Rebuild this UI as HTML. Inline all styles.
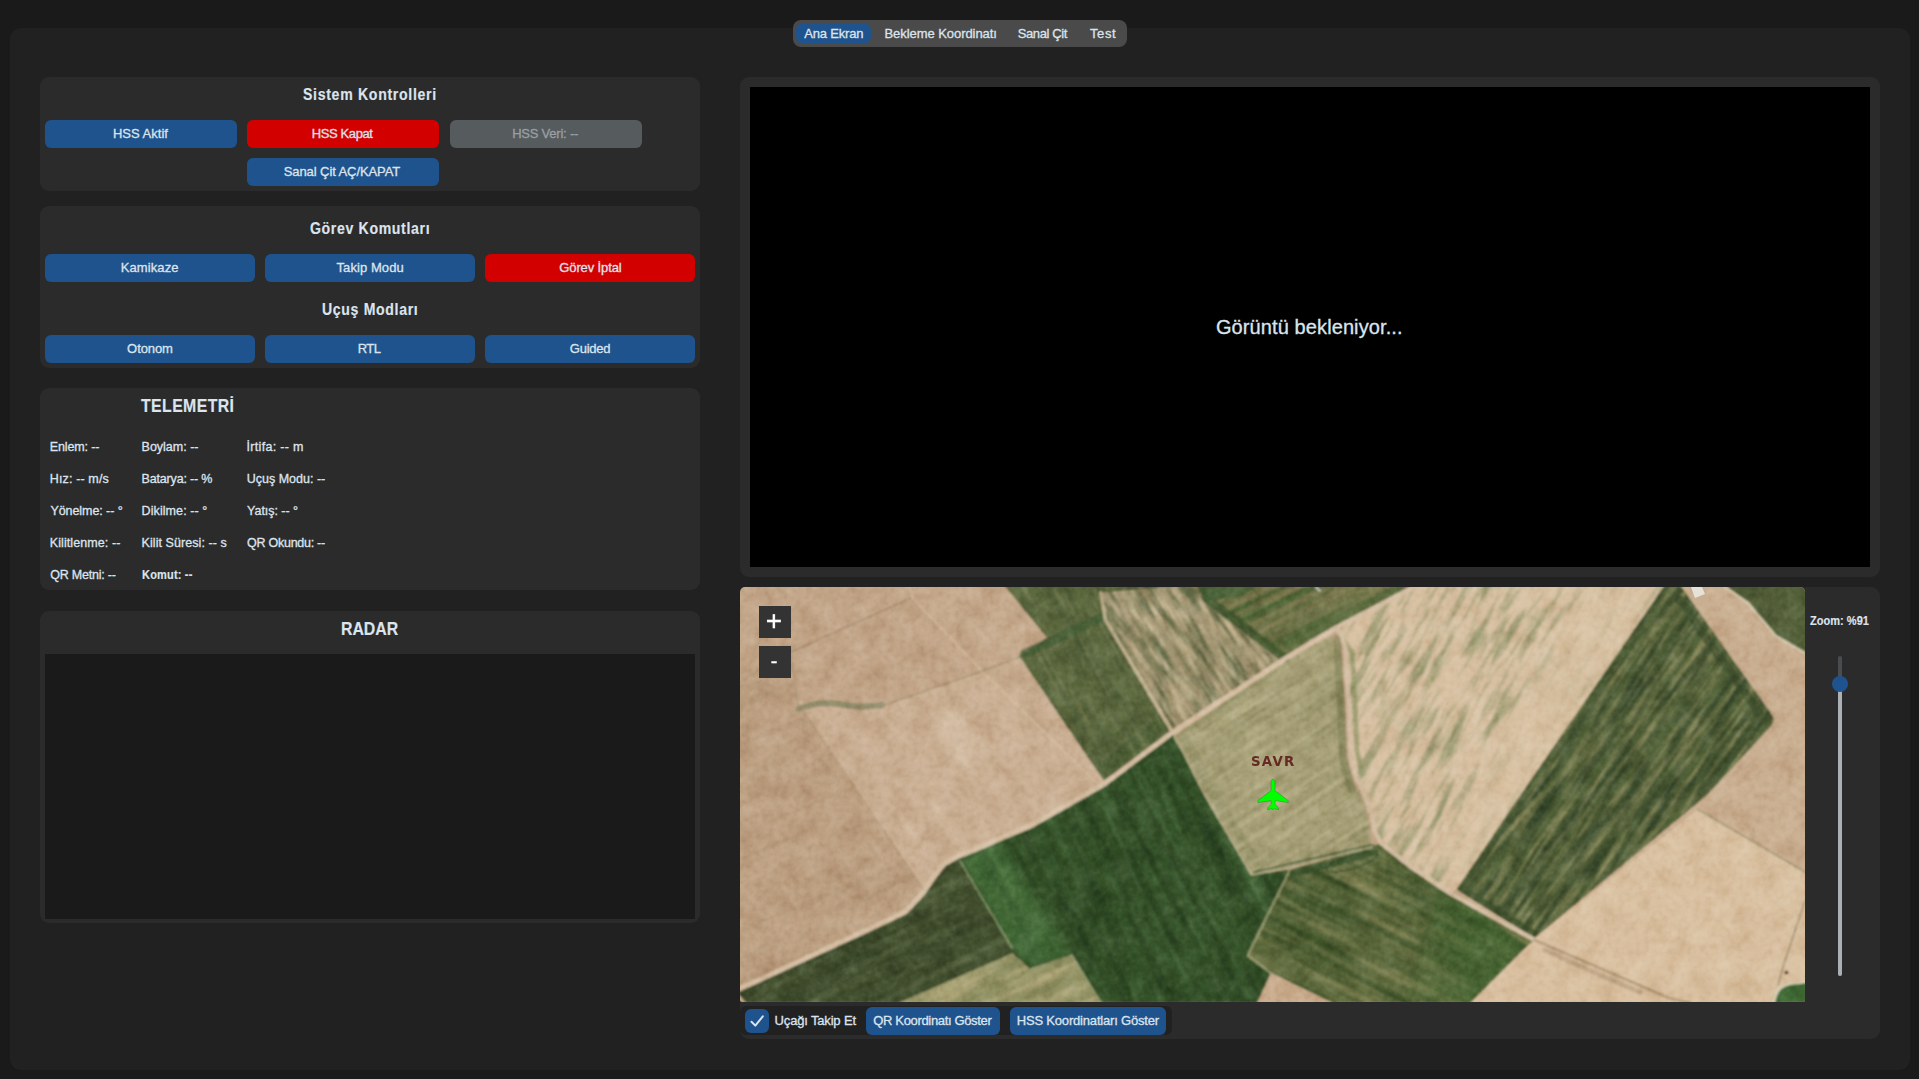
<!DOCTYPE html>
<html lang="tr">
<head>
<meta charset="utf-8">
<title>Yer İstasyonu</title>
<style>
html,body{margin:0;padding:0;}
body{width:1919px;height:1079px;overflow:hidden;background:#1a1a1a;position:relative;font-family:"Liberation Sans", sans-serif;color:#dce4ee;}
div,span,button,nav,section{position:absolute;box-sizing:border-box;}
.t{white-space:nowrap;line-height:20px;height:20px;transform-origin:0 50%;-webkit-text-stroke:0.3px currentColor;}
.b{-webkit-text-stroke:0.15px currentColor;}
.panel{background:#212121;border-radius:11px;}
.box{background:#2b2b2b;border-radius:9px;}
.btn{background:#1f538d;border-radius:6px;}
.red{background:#d30000;}
.dis{background:#565b5e;}
.tabs{background:#4a4a4a;border-radius:8px;}
.tabsel{background:#1f538d;border-radius:7px;}
.radar{background:#1a1a1a;}
.video{background:#000;}
.zb{background:#333;}
#map{left:740px;top:587px;width:1065px;height:415px;overflow:hidden;border-radius:5px 5px 2px 2px;}
#map svg{display:block;}
</style>
</head>
<body>
<div class="panel" style="left:10px;top:28px;width:1900px;height:1042px;"></div>

<!-- tab bar -->
<nav class="tabs" style="left:793px;top:20px;width:334px;height:27px;"></nav>
<div class="tabsel" style="left:796px;top:23px;width:75px;height:21px;"></div>
<span class="t" style="left:804.30px;top:24.27px;font-size:13px;letter-spacing:-0.201px;">Ana Ekran</span><span class="t" style="left:884.51px;top:24.27px;font-size:13px;letter-spacing:-0.061px;">Bekleme Koordinatı</span><span class="t" style="left:1017.74px;top:24.27px;font-size:13px;letter-spacing:-0.395px;">Sanal Çit</span><span class="t" style="left:1089.90px;top:24.27px;font-size:13px;letter-spacing:0.657px;">Test</span>

<!-- Sistem Kontrolleri -->
<section class="box" style="position:absolute;left:40px;top:77px;width:660px;height:114px;"></section>
<span class="t b" style="left:302.98px;top:85.16px;font-size:16px;letter-spacing:0.792px;transform:scaleX(0.88);font-weight:700;">Sistem Kontrolleri</span>
<div class="btn" style="left:45px;top:120px;width:192px;height:28px;"></div><span class="t" style="left:112.99px;top:123.97px;font-size:13px;letter-spacing:0.001px;">HSS Aktif</span>
<div class="btn red" style="left:247px;top:120px;width:192px;height:28px;"></div><span class="t" style="left:311.72px;top:123.97px;font-size:13px;letter-spacing:-0.388px;">HSS Kapat</span>
<div class="btn dis" style="left:450px;top:120px;width:192px;height:28px;"></div><span class="t" style="left:512.20px;top:123.97px;font-size:13px;letter-spacing:-0.227px;color:#9a9fa3;">HSS Veri: --</span>
<div class="btn" style="left:247px;top:158px;width:192px;height:28px;"></div><span class="t" style="left:283.74px;top:161.97px;font-size:13px;letter-spacing:-0.085px;">Sanal Çit AÇ/KAPAT</span>

<!-- Görev Komutları -->
<section class="box" style="position:absolute;left:40px;top:206px;width:660px;height:162px;"></section>
<span class="t b" style="left:309.52px;top:219.16px;font-size:16px;letter-spacing:0.749px;transform:scaleX(0.88);font-weight:700;">Görev Komutları</span>
<div class="btn" style="left:45px;top:254px;width:210px;height:28px;"></div><span class="t" style="left:120.72px;top:257.97px;font-size:13px;letter-spacing:0.095px;">Kamikaze</span>
<div class="btn" style="left:265px;top:254px;width:210px;height:28px;"></div><span class="t" style="left:336.50px;top:257.97px;font-size:13px;letter-spacing:0.083px;">Takip Modu</span>
<div class="btn red" style="left:485px;top:254px;width:210px;height:28px;"></div><span class="t" style="left:559.30px;top:257.97px;font-size:13px;letter-spacing:-0.121px;">Görev İptal</span>
<span class="t b" style="left:321.83px;top:300.16px;font-size:16px;letter-spacing:0.754px;transform:scaleX(0.88);font-weight:700;">Uçuş Modları</span>
<div class="btn" style="left:45px;top:335px;width:210px;height:28px;"></div><span class="t" style="left:127.11px;top:338.97px;font-size:13px;letter-spacing:-0.083px;">Otonom</span>
<div class="btn" style="left:265px;top:335px;width:210px;height:28px;"></div><span class="t" style="left:357.72px;top:338.97px;font-size:13px;letter-spacing:-0.574px;">RTL</span>
<div class="btn" style="left:485px;top:335px;width:210px;height:28px;"></div><span class="t" style="left:569.74px;top:338.97px;font-size:13px;letter-spacing:-0.214px;">Guided</span>

<!-- Telemetri -->
<section class="box" style="position:absolute;left:40px;top:388px;width:660px;height:202px;"></section>
<span class="t b" style="left:140.70px;top:395.85px;font-size:18px;letter-spacing:0.458px;transform:scaleX(0.88);font-weight:700;">TELEMETRİ</span>
<span class="t" style="left:49.84px;top:437.17px;font-size:12.5px;letter-spacing:-0.128px;">Enlem: --</span><span class="t" style="left:141.58px;top:437.17px;font-size:12.5px;letter-spacing:-0.009px;">Boylam: --</span><span class="t" style="left:246.50px;top:437.17px;font-size:12.5px;letter-spacing:0.316px;">İrtifa: -- m</span><span class="t" style="left:49.84px;top:469.17px;font-size:12.5px;letter-spacing:0.130px;">Hız: -- m/s</span><span class="t" style="left:141.58px;top:469.17px;font-size:12.5px;letter-spacing:-0.175px;">Batarya: -- %</span><span class="t" style="left:246.75px;top:469.17px;font-size:12.5px;letter-spacing:-0.003px;">Uçuş Modu: --</span><span class="t" style="left:50.40px;top:501.17px;font-size:12.5px;letter-spacing:-0.061px;">Yönelme: -- °</span><span class="t" style="left:141.58px;top:501.17px;font-size:12.5px;letter-spacing:0.083px;">Dikilme: -- °</span><span class="t" style="left:247.10px;top:501.17px;font-size:12.5px;letter-spacing:-0.038px;">Yatış: -- °</span><span class="t" style="left:49.84px;top:533.17px;font-size:12.5px;letter-spacing:0.080px;">Kilitlenme: --</span><span class="t" style="left:141.58px;top:533.17px;font-size:12.5px;letter-spacing:0.068px;">Kilit Süresi: -- s</span><span class="t" style="left:247.10px;top:533.17px;font-size:12.5px;letter-spacing:-0.268px;">QR Okundu: --</span><span class="t" style="left:50.18px;top:565.17px;font-size:12.5px;letter-spacing:-0.209px;">QR Metni: --</span><span class="t b" style="left:141.55px;top:565.17px;font-size:12.5px;letter-spacing:0.209px;transform:scaleX(0.88);font-weight:700;">Komut: --</span>

<!-- Radar -->
<section class="box" style="position:absolute;left:40px;top:611px;width:660px;height:312px;"></section>
<span class="t b" style="left:340.62px;top:618.75px;font-size:18px;letter-spacing:-0.033px;transform:scaleX(0.88);font-weight:700;">RADAR</span>
<div class="radar" style="left:45px;top:654px;width:650px;height:265px;"></div>

<!-- Video -->
<section class="box" style="position:absolute;left:740px;top:77px;width:1140px;height:500px;"></section>
<div class="video" style="left:750px;top:87px;width:1120px;height:480px;"></div>
<span class="t" style="left:1215.95px;top:316.75px;font-size:20px;letter-spacing:0.102px;">Görüntü bekleniyor...</span>

<!-- Map -->
<section class="box" style="position:absolute;left:740px;top:587px;width:1140px;height:452px;"></section>
<div id="map">
<svg width="1065" height="415" viewBox="740 587 1065 415">
<defs>
<filter id="grainA" x="0" y="0" width="100%" height="100%" color-interpolation-filters="sRGB"><feTurbulence type="fractalNoise" baseFrequency="0.045" numOctaves="3" seed="7"/><feColorMatrix type="matrix" values="0.45 0 0 0 0.275 0.45 0 0 0 0.275 0.45 0 0 0 0.275 0 0 0 0 1"/></filter>
<filter id="grainB" x="0" y="0" width="100%" height="100%" color-interpolation-filters="sRGB"><feTurbulence type="fractalNoise" baseFrequency="0.16" numOctaves="2" seed="19"/><feColorMatrix type="matrix" values="0 0.45 0 0 0.275 0 0.45 0 0 0.275 0 0.45 0 0 0.275 0 0 0 0 1"/><feGaussianBlur stdDeviation="0.7"/></filter>
<linearGradient id="gO3r" x1="1390" y1="0" x2="1480" y2="0" gradientUnits="userSpaceOnUse"><stop offset="0" stop-color="#41652f" stop-opacity="0"/><stop offset="1" stop-color="#41652f" stop-opacity="0.65"/></linearGradient>
<filter id="soft4" x="-30%" y="-30%" width="160%" height="160%"><feGaussianBlur stdDeviation="10"/></filter>
<filter id="soft5" x="-30%" y="-30%" width="160%" height="160%"><feGaussianBlur stdDeviation="4"/></filter>
<filter id="soft3" x="-50%" y="-50%" width="200%" height="200%"><feGaussianBlur stdDeviation="6"/></filter>
<filter id="soft" x="-2%" y="-2%" width="104%" height="104%"><feGaussianBlur stdDeviation="0.9"/></filter>
<clipPath id="cG2L"><polygon points="747,1003 736,990.5 876,926 905,912 922,894 933,878 944,864 958,856 960,861 1016,950 898,1003"/></clipPath>
<clipPath id="cTLL"><polygon points="736,683 790,648 797,702 924,890 922,894 905,912 876,926 736,990.5"/></clipPath>
<clipPath id="cTUR"><polygon points="912.7,598.5 909,585 1004,585 1048,639 1020,657 985.6,675"/></clipPath>
<clipPath id="cG1"><polygon points="1004,585 1048,639 1020,657 1104,781 1171.7,733 1105.6,620 1100.7,592.8 1191,585"/></clipPath>
<clipPath id="cM"><polygon points="1100.7,592.8 1191,585 1204,594 1284.6,656 1171.7,731 1105.6,620"/></clipPath>
<clipPath id="cO1"><polygon points="1188,585 1418,585 1336,628 1284.6,659 1204,594"/></clipPath>
<clipPath id="cPf"><polygon points="1174,736 1284.6,661 1331,636 1340,652 1344,704 1346,758 1353,782 1362,797 1368,817 1372,846.5 1251.5,874.7 1203,792 1183,752"/></clipPath>
<clipPath id="cL"><polygon points="1418,585 1665,585 1519,797 1456.7,889.3 1450,893 1410,866 1381,843 1375,832 1372,817 1366,797 1357,780 1350.7,758 1348.8,703.8 1345.4,649.5 1342,636 1336,628"/></clipPath>
<clipPath id="cD"><polygon points="1665,585 1680,585 1770,712 1774,719 1771,726 1707,795 1534.5,938 1456.7,889.3 1519,797"/></clipPath>
<clipPath id="cRT"><polygon points="1678,585 1725,585 1748,603 1776,636 1807,654 1807,1003 1470,1003 1527,946 1534.5,938 1707,795 1774,719"/></clipPath>
<clipPath id="cT3"><polygon points="1698,809.5 1805,872 1807,901 1807,1003 1470,1003 1527,946 1534.5,938"/></clipPath>
<clipPath id="cG5"><polygon points="1725,585 1807,585 1807,654 1776,636 1748,603"/></clipPath>
<clipPath id="cG2"><polygon points="747,1003 736,990.5 876,926 905,912 922,894 933,878 944,864 958,856 973.5,850 1032,825 1090,792 1104,784 1171.7,733 1174,736 1183,752 1203,792 1251.5,875 1290,870 1247.6,955.5 1271,973 1257,1003"/></clipPath>
<clipPath id="cG2b"><polygon points="960,861 973.5,850 1032,825 1090,792 1104,784 1171.7,733 1183,752 1203,792 1251.5,875 1290,870 1247.6,955.5 1271,973 1257,1003 1103,1003 1071.7,954.7 1029.5,968.8 1012,950"/></clipPath>
<clipPath id="cO2"><polygon points="898,1003 1012.3,953.2 1021.7,961 1029.5,968.8 1071.7,954.7 1101.4,1003"/></clipPath>
<clipPath id="cO3"><polygon points="1290,870 1372,846.5 1381,843 1410,866 1450,893 1534.5,940 1527,946 1470,1003 1333,1003 1271,973 1247.6,955.5"/></clipPath>
<clipPath id="cT4"><polygon points="1271,973 1333,1003 1257,1003"/></clipPath>
<clipPath id="cTL"><polygon points="736,585 1004,585 1048,639 1020,657 975.5,673.6 911,598 791,652 799,708 736,750"/></clipPath>
<clipPath id="cTM"><polygon points="797.6,702 882,706 975.5,673.6 985.6,675 1020,657 1104,781 1090,792 1032,825 973.5,850 958,856 944,864 933,878 924,890"/></clipPath>
<filter id="n1" x="0" y="0" width="100%" height="100%" color-interpolation-filters="sRGB"><feTurbulence type="fractalNoise" baseFrequency="0.008 0.12" numOctaves="2" seed="5"/><feColorMatrix type="matrix" values="0 0 0 0 0.647 0 0 0 0 0.541 0 0 0 0 0.416 1.4 0 0 0 -0.75"/></filter>
<filter id="n2" x="0" y="0" width="100%" height="100%" color-interpolation-filters="sRGB"><feTurbulence type="fractalNoise" baseFrequency="0.012 0.07" numOctaves="2" seed="8"/><feColorMatrix type="matrix" values="0 0 0 0 0.847 0 0 0 0 0.765 0 0 0 0 0.659 1.3 0 0 0 -0.7"/></filter>
<filter id="n3" x="0" y="0" width="100%" height="100%" color-interpolation-filters="sRGB"><feTurbulence type="fractalNoise" baseFrequency="0.012 0.16" numOctaves="2" seed="11"/><feColorMatrix type="matrix" values="0 0 0 0 0.522 0 0 0 0 0.533 0 0 0 0 0.353 2.0 0 0 0 -1.0"/></filter>
<filter id="n4" x="0" y="0" width="100%" height="100%" color-interpolation-filters="sRGB"><feTurbulence type="fractalNoise" baseFrequency="0.012 0.14" numOctaves="2" seed="12"/><feColorMatrix type="matrix" values="0 0 0 0 0.263 0 0 0 0 0.337 0 0 0 0 0.196 2.0 0 0 0 -0.95"/></filter>
<filter id="n5" x="0" y="0" width="100%" height="100%" color-interpolation-filters="sRGB"><feTurbulence type="fractalNoise" baseFrequency="0.008 0.12" numOctaves="2" seed="21"/><feColorMatrix type="matrix" values="0 0 0 0 0.373 0 0 0 0 0.431 0 0 0 0 0.275 2.0 0 0 0 -1.0"/></filter>
<filter id="n6" x="0" y="0" width="100%" height="100%" color-interpolation-filters="sRGB"><feTurbulence type="fractalNoise" baseFrequency="0.01 0.12" numOctaves="2" seed="22"/><feColorMatrix type="matrix" values="0 0 0 0 0.184 0 0 0 0 0.239 0 0 0 0 0.133 2.0 0 0 0 -1.0"/></filter>
<filter id="n7" x="0" y="0" width="100%" height="100%" color-interpolation-filters="sRGB"><feTurbulence type="fractalNoise" baseFrequency="0.008 0.09" numOctaves="2" seed="23"/><feColorMatrix type="matrix" values="0 0 0 0 0.333 0 0 0 0 0.478 0 0 0 0 0.282 1.9 0 0 0 -1.0"/></filter>
<filter id="n8" x="0" y="0" width="100%" height="100%" color-interpolation-filters="sRGB"><feTurbulence type="fractalNoise" baseFrequency="0.01 0.11" numOctaves="2" seed="24"/><feColorMatrix type="matrix" values="0 0 0 0 0.153 0 0 0 0 0.251 0 0 0 0 0.125 2.2 0 0 0 -0.95"/></filter>
<filter id="n9" x="0" y="0" width="100%" height="100%" color-interpolation-filters="sRGB"><feTurbulence type="fractalNoise" baseFrequency="0.012 0.15" numOctaves="2" seed="31"/><feColorMatrix type="matrix" values="0 0 0 0 0.725 0 0 0 0 0.678 0 0 0 0 0.502 2.4 0 0 0 -1.1"/></filter>
<filter id="n10" x="0" y="0" width="100%" height="100%" color-interpolation-filters="sRGB"><feTurbulence type="fractalNoise" baseFrequency="0.02 0.13" numOctaves="3" seed="41"/><feColorMatrix type="matrix" values="0 0 0 0 0.373 0 0 0 0 0.400 0 0 0 0 0.259 3.2 0 0 0 -1.25"/></filter>
<filter id="n11" x="0" y="0" width="100%" height="100%" color-interpolation-filters="sRGB"><feTurbulence type="fractalNoise" baseFrequency="0.025 0.15" numOctaves="3" seed="42"/><feColorMatrix type="matrix" values="0 0 0 0 0.804 0 0 0 0 0.733 0 0 0 0 0.596 2.6 0 0 0 -1.1"/></filter>
<filter id="n12" x="0" y="0" width="100%" height="100%" color-interpolation-filters="sRGB"><feTurbulence type="fractalNoise" baseFrequency="0.006 0.11" numOctaves="2" seed="51"/><feColorMatrix type="matrix" values="0 0 0 0 0.616 0 0 0 0 0.561 0 0 0 0 0.392 2.4 0 0 0 -1.05"/></filter>
<filter id="n13" x="0" y="0" width="100%" height="100%" color-interpolation-filters="sRGB"><feTurbulence type="fractalNoise" baseFrequency="0.006 0.12" numOctaves="2" seed="52"/><feColorMatrix type="matrix" values="0 0 0 0 0.267 0 0 0 0 0.376 0 0 0 0 0.184 2.6 0 0 0 -1.1"/></filter>
<filter id="n14" x="0" y="0" width="100%" height="100%" color-interpolation-filters="sRGB"><feTurbulence type="fractalNoise" baseFrequency="0.01 0.2" numOctaves="2" seed="61"/><feColorMatrix type="matrix" values="0 0 0 0 0.553 0 0 0 0 0.545 0 0 0 0 0.376 2.4 0 0 0 -1.1"/></filter>
<filter id="n15" x="0" y="0" width="100%" height="100%" color-interpolation-filters="sRGB"><feTurbulence type="fractalNoise" baseFrequency="0.01 0.18" numOctaves="2" seed="62"/><feColorMatrix type="matrix" values="0 0 0 0 0.737 0 0 0 0 0.706 0 0 0 0 0.549 2.4 0 0 0 -1.1"/></filter>
<filter id="n16" x="0" y="0" width="100%" height="100%" color-interpolation-filters="sRGB"><feTurbulence type="fractalNoise" baseFrequency="0.018 0.1" numOctaves="3" seed="71"/><feColorMatrix type="matrix" values="0 0 0 0 0.561 0 0 0 0 0.569 0 0 0 0 0.400 3.2 0 0 0 -1.6"/></filter>
<filter id="n17" x="0" y="0" width="100%" height="100%" color-interpolation-filters="sRGB"><feTurbulence type="fractalNoise" baseFrequency="0.02 0.2" numOctaves="3" seed="72"/><feColorMatrix type="matrix" values="0 0 0 0 0.647 0 0 0 0 0.643 0 0 0 0 0.478 2.4 0 0 0 -1.25"/></filter>
<filter id="n18" x="0" y="0" width="100%" height="100%" color-interpolation-filters="sRGB"><feTurbulence type="fractalNoise" baseFrequency="0.01 0.12" numOctaves="2" seed="81"/><feColorMatrix type="matrix" values="0 0 0 0 0.863 0 0 0 0 0.776 0 0 0 0 0.659 1.6 0 0 0 -0.8"/></filter>
<filter id="n19" x="0" y="0" width="100%" height="100%" color-interpolation-filters="sRGB"><feTurbulence type="fractalNoise" baseFrequency="0.014 0.16" numOctaves="3" seed="91"/><feColorMatrix type="matrix" values="0 0 0 0 0.541 0 0 0 0 0.541 0 0 0 0 0.361 3.0 0 0 0 -1.25"/></filter>
<filter id="n20" x="0" y="0" width="100%" height="100%" color-interpolation-filters="sRGB"><feTurbulence type="fractalNoise" baseFrequency="0.014 0.15" numOctaves="3" seed="92"/><feColorMatrix type="matrix" values="0 0 0 0 0.208 0 0 0 0 0.278 0 0 0 0 0.165 2.8 0 0 0 -1.2"/></filter>
<filter id="n21" x="0" y="0" width="100%" height="100%" color-interpolation-filters="sRGB"><feTurbulence type="fractalNoise" baseFrequency="0.008 0.12" numOctaves="2" seed="101"/><feColorMatrix type="matrix" values="0 0 0 0 0.522 0 0 0 0 0.525 0 0 0 0 0.341 2.8 0 0 0 -1.2"/></filter>
<filter id="n22" x="0" y="0" width="100%" height="100%" color-interpolation-filters="sRGB"><feTurbulence type="fractalNoise" baseFrequency="0.008 0.1" numOctaves="2" seed="102"/><feColorMatrix type="matrix" values="0 0 0 0 0.235 0 0 0 0 0.318 0 0 0 0 0.157 2.8 0 0 0 -1.2"/></filter>
</defs>
<rect x="740" y="587" width="1065" height="416" fill="#c2a588"/>
<g filter="url(#soft)">
<polygon points="736,683 790,648 797,702 924,890 922,894 905,912 876,926 736,990.5" fill="#bda082" />
<polygon points="797.6,702 882,706 975.5,673.6 985.6,675 1020,657 1104,781 1090,792 1032,825 973.5,850 958,856 944,864 933,878 924,890" fill="#c9ae92" />
<polygon points="912.7,598.5 909,585 1004,585 1048,639 1020,657 985.6,675" fill="#c5a98c" />
<g clip-path="url(#cTLL)"><rect x="631" y="620" width="399" height="399" transform="rotate(-24 830 819)" filter="url(#n1)"/></g>
<g clip-path="url(#cTM)"><rect x="754" y="577" width="393" height="393" transform="rotate(55 951 774)" filter="url(#n2)"/></g>
<ellipse cx="958" cy="742" rx="14" ry="34" transform="rotate(-25 958 742)" fill="#e0cfb9" opacity="0.38" filter="url(#soft3)"/>
<polygon points="1004,585 1048,639 1020,657 1104,781 1171.7,733 1105.6,620 1100.7,592.8 1191,585" fill="#5b673e" />
<polyline points="1108,774 1166,731" fill="none" stroke="#44582f" stroke-width="14" stroke-linecap="round" stroke-linejoin="round" opacity="0.6" transform="translate(-3,-7)"/>
<g clip-path="url(#cG1)"><rect x="958" y="544" width="279" height="279" transform="rotate(62 1098 683)" filter="url(#n3)"/></g>
<g clip-path="url(#cG1)"><rect x="958" y="544" width="279" height="279" transform="rotate(62 1098 683)" filter="url(#n4)"/></g>
<polygon points="747,1003 736,990.5 876,926 905,912 922,894 933,878 944,864 958,856 973.5,850 1032,825 1090,792 1104,784 1171.7,733 1174,736 1183,752 1203,792 1251.5,875 1290,870 1247.6,955.5 1271,973 1257,1003" fill="#424f2e" />
<polygon points="960,861 973.5,850 1032,825 1090,792 1104,784 1171.7,733 1183,752 1203,792 1251.5,875 1290,870 1247.6,955.5 1271,973 1257,1003 1103,1003 1071.7,954.7 1029.5,968.8 1012,950" fill="#355229" />
<g clip-path="url(#cG2L)"><rect x="714" y="767" width="324" height="324" transform="rotate(-25 876 930)" filter="url(#n5)"/></g>
<g clip-path="url(#cG2L)"><rect x="714" y="767" width="324" height="324" transform="rotate(-25 876 930)" filter="url(#n6)"/></g>
<g clip-path="url(#cG2b)"><rect x="908" y="651" width="434" height="434" transform="rotate(63 1125 868)" filter="url(#n7)"/></g>
<g clip-path="url(#cG2b)"><rect x="908" y="651" width="434" height="434" transform="rotate(63 1125 868)" filter="url(#n8)"/></g>
<g clip-path="url(#cG2b)"><polygon points="960,861 973.5,850 1000,839 1058,935 1071.7,954.7 1029.5,968.8 1012,950" fill="#4f7d42" opacity="0.55" filter="url(#soft5)"/></g>
<polygon points="898,1003 1012.3,953.2 1021.7,961 1029.5,968.8 1071.7,954.7 1101.4,1003" fill="#8f9062" />
<g clip-path="url(#cO2)"><rect x="891" y="869" width="217" height="217" transform="rotate(-25 1000 978)" filter="url(#n9)"/></g>
<polygon points="1100.7,592.8 1191,585 1204,594 1284.6,656 1171.7,731 1105.6,620" fill="#9f926f" />
<g clip-path="url(#cM)"><rect x="1071" y="537" width="243" height="243" transform="rotate(58 1193 658)" filter="url(#n10)"/></g>
<g clip-path="url(#cM)"><rect x="1071" y="537" width="243" height="243" transform="rotate(58 1193 658)" filter="url(#n11)"/></g>
<polygon points="1188,585 1418,585 1336,628 1284.6,659 1204,594" fill="#74744a" />
<g clip-path="url(#cO1)"><rect x="1178" y="497" width="250" height="250" transform="rotate(-27 1303 622)" filter="url(#n12)"/></g>
<g clip-path="url(#cO1)"><rect x="1178" y="497" width="250" height="250" transform="rotate(-27 1303 622)" filter="url(#n13)"/></g>
<polygon points="1174,736 1284.6,661 1331,636 1340,652 1344,704 1346,758 1353,782 1362,797 1368,817 1372,846.5 1251.5,874.7 1203,792 1183,752" fill="#a59e76" />
<polyline points="1180,740 1189,756 1209,796 1256,872" fill="none" stroke="#8a885e" stroke-width="9" stroke-linecap="round" stroke-linejoin="round" opacity="0.5" transform="translate(5,-2)"/>
<g clip-path="url(#cPf)"><rect x="1114" y="596" width="318" height="318" transform="rotate(-33 1273 755)" filter="url(#n14)"/></g>
<g clip-path="url(#cPf)"><rect x="1114" y="596" width="318" height="318" transform="rotate(-33 1273 755)" filter="url(#n15)"/></g>
<polygon points="1418,585 1665,585 1519,797 1456.7,889.3 1450,893 1410,866 1381,843 1375,832 1372,817 1366,797 1357,780 1350.7,758 1348.8,703.8 1345.4,649.5 1342,636 1336,628" fill="#d8c1a3" />
<g clip-path="url(#cL)"><rect x="1271" y="510" width="459" height="459" transform="rotate(-60 1500 739)" filter="url(#n16)"/></g>
<g clip-path="url(#cL)"><rect x="1271" y="510" width="459" height="459" transform="rotate(-60 1500 739)" filter="url(#n17)"/></g>
<g clip-path="url(#cL)"><polygon points="1585,585 1668,585 1522,797 1458,892 1430,860 1480,770" fill="#d9c2a4" opacity="0.85" filter="url(#soft4)"/></g>
<polygon points="1678,585 1725,585 1748,603 1776,636 1807,654 1807,1003 1470,1003 1527,946 1534.5,938 1707,795 1774,719" fill="#c9ae90" />
<polygon points="1698,809.5 1805,872 1807,901 1807,1003 1470,1003 1527,946 1534.5,938" fill="#d8bf9f" />
<g clip-path="url(#cT3)"><rect x="1440" y="708" width="397" height="397" transform="rotate(-58 1638 906)" filter="url(#n18)"/></g>
<polygon points="1665,585 1680,585 1770,712 1774,719 1771,726 1707,795 1534.5,938 1456.7,889.3 1519,797" fill="#505f36" />
<g clip-path="url(#cD)"><rect x="1374" y="520" width="483" height="483" transform="rotate(-55 1615 762)" filter="url(#n19)"/></g>
<g clip-path="url(#cD)"><rect x="1374" y="520" width="483" height="483" transform="rotate(-55 1615 762)" filter="url(#n20)"/></g>
<polygon points="1725,585 1807,585 1807,654 1776,636 1748,603" fill="#535e38" />
<polygon points="1290,870 1372,846.5 1381,843 1410,866 1450,893 1534.5,940 1527,946 1470,1003 1333,1003 1271,973 1247.6,955.5" fill="#5c693b" />
<g clip-path="url(#cO3)"><rect x="1223" y="755" width="336" height="336" transform="rotate(27 1391 923)" filter="url(#n21)"/></g>
<g clip-path="url(#cO3)"><rect x="1223" y="755" width="336" height="336" transform="rotate(27 1391 923)" filter="url(#n22)"/></g>
<polygon points="1440,885 1527,946 1470,1003 1400,1003" fill="url(#gO3r)" />
<polygon points="1271,973 1333,1003 1257,1003" fill="#c8ab8c" />
<polyline points="1206,598 1284.6,658" fill="none" stroke="#42592f" stroke-width="9" stroke-linecap="round" stroke-linejoin="round" opacity="0.85"/>
<polyline points="1291,652 1336,630 1405,594" fill="none" stroke="#4a6535" stroke-width="9" stroke-linecap="round" stroke-linejoin="round" opacity="0.6" transform="translate(-4,-7)"/>
<polyline points="1048,639 1020,657" fill="none" stroke="#3a4f2a" stroke-width="3" stroke-linecap="round" stroke-linejoin="round" opacity="0.7"/>
<polyline points="1024,657 1104,619" fill="none" stroke="#3f5a30" stroke-width="9" stroke-linecap="round" stroke-linejoin="round" opacity="0.7" transform="translate(0,-3)"/>
<polyline points="1337,640 1341,704 1343,760 1352,790" fill="none" stroke="#7d7f54" stroke-width="8" stroke-linecap="round" stroke-linejoin="round" opacity="0.6"/>
<polyline points="1255,873 1372,846" fill="none" stroke="#3b522a" stroke-width="4" stroke-linecap="round" stroke-linejoin="round" opacity="0.7"/>
<polyline points="1463,889 1534,934" fill="none" stroke="#3a4f2b" stroke-width="7" stroke-linecap="round" stroke-linejoin="round" opacity="0.7"/>
<polyline points="1684,597 1768,716 1706,790" fill="none" stroke="#394a29" stroke-width="9" stroke-linecap="round" stroke-linejoin="round" opacity="0.6" transform="translate(-5,2)"/>
<polyline points="1662,590 1519,797 1460,886" fill="none" stroke="#4a5a33" stroke-width="4" stroke-linecap="round" stroke-linejoin="round" opacity="0.6" transform="translate(4,1)"/>
<polyline points="736,990.5 876,926 905,912 922,894 933,878 944,864 958,856 973.5,850 1032,825 1090,792 1104,784 1171.7,733 1284.6,659 1336,628 1380,605 1418,585" fill="none" stroke="#d6c0a5" stroke-width="5.2" stroke-linecap="round" stroke-linejoin="round" />
<polyline points="1343,640 1352,652 1355,704 1357,750 1362,775" fill="none" stroke="#7f8a58" stroke-width="5" stroke-linecap="round" stroke-linejoin="round" opacity="0.55"/>
<polyline points="1336,628 1342,636 1345.4,649.5 1347,680 1348.8,703.8 1350.7,758 1357,780 1366,797 1372,817 1375,832 1381,843 1410,866 1450,893 1534.5,940" fill="none" stroke="#d4bfa4" stroke-width="4.6" stroke-linecap="round" stroke-linejoin="round" />
<polyline points="1100.7,592.8 1105.6,620 1171.7,731" fill="none" stroke="#cdbc9b" stroke-width="3.6" stroke-linecap="round" stroke-linejoin="round" opacity="0.85"/>
<polyline points="1534.5,940 1669,998 1690,1003" fill="none" stroke="#a08664" stroke-width="2.5" stroke-linecap="round" stroke-linejoin="round" opacity="0.65"/>
<polyline points="1545,950 1600,975 1640,992" fill="none" stroke="#96795a" stroke-width="5" stroke-linecap="round" stroke-linejoin="round" opacity="0.35"/>
<polyline points="1174,737 1183,752 1203,792 1251.5,875 1372,847" fill="none" stroke="#c0b892" stroke-width="1.8" stroke-linecap="round" stroke-linejoin="round" opacity="0.8"/>
<polyline points="1290,870 1247.6,955.5 1271,973" fill="none" stroke="#a5a379" stroke-width="2.2" stroke-linecap="round" stroke-linejoin="round" opacity="0.85"/>
<polyline points="960,861 1012,948" fill="none" stroke="#94a374" stroke-width="1.6" stroke-linecap="round" stroke-linejoin="round" opacity="0.8"/>
<polyline points="1071.7,954.7 1101.4,1003" fill="none" stroke="#a4ac7e" stroke-width="1.4" stroke-linecap="round" stroke-linejoin="round" opacity="0.7"/>
<polyline points="1698,809.5 1805,872" fill="none" stroke="#8c8561" stroke-width="1.6" stroke-linecap="round" stroke-linejoin="round" opacity="0.7"/>
<polyline points="1805,901 1783,967 1778,985" fill="none" stroke="#87775a" stroke-width="1.5" stroke-linecap="round" stroke-linejoin="round" opacity="0.7"/>
<polygon points="1196,585 1258,585 1242,596 1206,601" fill="#3f5a30" opacity="0.8"/>
<path d="M1252,589 C1262,600 1272,600 1270,587" fill="none" stroke="#4a5a30" stroke-width="1.6" opacity="0.7"/>
<polyline points="1292,869 1330,860 1374,848" fill="none" stroke="#36502a" stroke-width="7" stroke-linecap="round" stroke-linejoin="round" opacity="0.75" transform="translate(1,4)"/>
<ellipse cx="1352" cy="862" rx="27" ry="6.5" transform="rotate(-17 1352 862)" fill="none" stroke="#34482a" stroke-width="1.6" opacity="0.75"/>
<ellipse cx="1405" cy="884" rx="22" ry="5" transform="rotate(33 1405 884)" fill="none" stroke="#3d5230" stroke-width="1.4" opacity="0.5"/>
<path d="M1774,1003 C1776,992 1780,986 1790,984 L1807,982 L1807,1003 Z" fill="#416a36"/>
<path d="M1774,1003 C1776,992 1780,986 1790,984 L1807,982" fill="none" stroke="#d9d4bd" stroke-width="2"/>
<circle cx="1786.5" cy="972.5" r="1.8" fill="#4a2f22"/>
<polyline points="1316,587 1320,591" fill="none" stroke="#dfe3e0" stroke-width="1.6" stroke-linecap="round" stroke-linejoin="round" />
<polyline points="791,652 911,598" fill="none" stroke="#a08564" stroke-width="1.4" stroke-linecap="round" stroke-linejoin="round" opacity="0.8"/>
<polyline points="909,587 912.7,598.5 985.6,675 1097,783" fill="none" stroke="#d9c3a6" stroke-width="1.8" stroke-linecap="round" stroke-linejoin="round" opacity="0.6"/>
<polyline points="882,706 975.5,673.6 1020,657" fill="none" stroke="#998662" stroke-width="1.3" stroke-linecap="round" stroke-linejoin="round" opacity="0.8"/>
<polyline points="799,708.6 815,704 830,703 860,707 882,705" fill="none" stroke="#8d8968" stroke-width="6" stroke-linecap="round" stroke-linejoin="round" opacity="0.9"/>
<polyline points="790,648 797.6,702 924,890" fill="none" stroke="#a88c6e" stroke-width="1.6" stroke-linecap="round" stroke-linejoin="round" opacity="0.55"/>
<polyline points="740,683 790,648" fill="none" stroke="#a88c6e" stroke-width="1.4" stroke-linecap="round" stroke-linejoin="round" opacity="0.5"/>
<polyline points="1725,587 1748,603 1776,636 1805,653" fill="none" stroke="#d8ccb0" stroke-width="2.2" stroke-linecap="round" stroke-linejoin="round" opacity="0.95"/>
</g>
<rect x="740" y="587" width="1065" height="415" filter="url(#grainA)" style="mix-blend-mode:soft-light" opacity="0.75"/>
<rect x="740" y="587" width="1065" height="415" filter="url(#grainB)" style="mix-blend-mode:soft-light" opacity="0.5"/>
<polygon points="1691,587 1702,587 1705,594 1695,598" fill="#e6e2da"/>
<text x="1273.3" y="765.8" text-anchor="middle" font-family="DejaVu Sans, sans-serif" font-weight="700" font-size="13.3" letter-spacing="1.25" fill="#652a22">SAVR</text>
<path d="M1273,779.5C1274.4,779.5 1275,781 1275,783L1275,790.6L1288.2,800.6L1288.2,802.6L1275,800.6L1275,804.2L1278.5,808L1278.5,809.6L1274.1,808.6L1273,809.9L1271.9,808.6L1267.6,809.6L1267.6,808L1271,804.2L1271,800.6L1257.9,802.6L1257.9,800.6L1271,790.6L1271,783C1271,781 1271.6,779.5 1273,779.5Z" fill="#00ff00" stroke="#2a8a1e" stroke-width="0.5"/>
</svg>
</div>
<div class="zb" style="left:759px;top:606px;width:32px;height:32px;"></div>
<span class="t" style="left:758px;top:604.5px;width:32px;height:32px;line-height:32px;text-align:center;font-size:28px;color:#fff;">+</span>
<div class="zb" style="left:759px;top:646px;width:32px;height:32px;"></div>
<span class="t" style="left:758px;top:646px;width:32px;height:32px;line-height:30px;text-align:center;font-size:20px;color:#fff;">-</span>

<span class="t b" style="left:1810.00px;top:610.57px;font-size:12.5px;letter-spacing:0.040px;transform:scaleX(0.88);font-weight:700;">Zoom: %91</span>
<div class="" style="left:1838px;top:656px;width:4px;height:320px;background:#4a4d50;border-radius:2px;"></div>
<div class="" style="left:1838px;top:684px;width:4px;height:292px;background:#aab0b5;border-radius:2px;"></div>
<div class="" style="left:1832px;top:676px;width:16px;height:16px;background:#1f538d;border-radius:8px;"></div>

<!-- bottom controls -->
<div class="" style="left:740px;top:1006px;width:432px;height:29px;background:#212121;border-radius:6px;"></div>
<div class="btn" style="left:745px;top:1009px;width:24px;height:24px;"></div>
<svg style="position:absolute;left:745px;top:1009px" width="24" height="24" viewBox="0 0 24 24"><path d="M6.5 12.8 L10.3 16.6 L17.8 7.4" fill="none" stroke="#dce4ee" stroke-width="2" stroke-linecap="round" stroke-linejoin="round"/></svg>
<span class="t" style="left:774.61px;top:1010.97px;font-size:13px;letter-spacing:-0.169px;">Uçağı Takip Et</span>
<div class="btn" style="left:866px;top:1007px;width:134px;height:28px;"></div><span class="t" style="left:873.29px;top:1010.97px;font-size:13px;letter-spacing:-0.343px;">QR Koordinatı Göster</span>
<div class="btn" style="left:1010px;top:1007px;width:156px;height:28px;"></div><span class="t" style="left:1016.72px;top:1010.97px;font-size:13px;letter-spacing:-0.185px;">HSS Koordinatları Göster</span>
</body>
</html>
